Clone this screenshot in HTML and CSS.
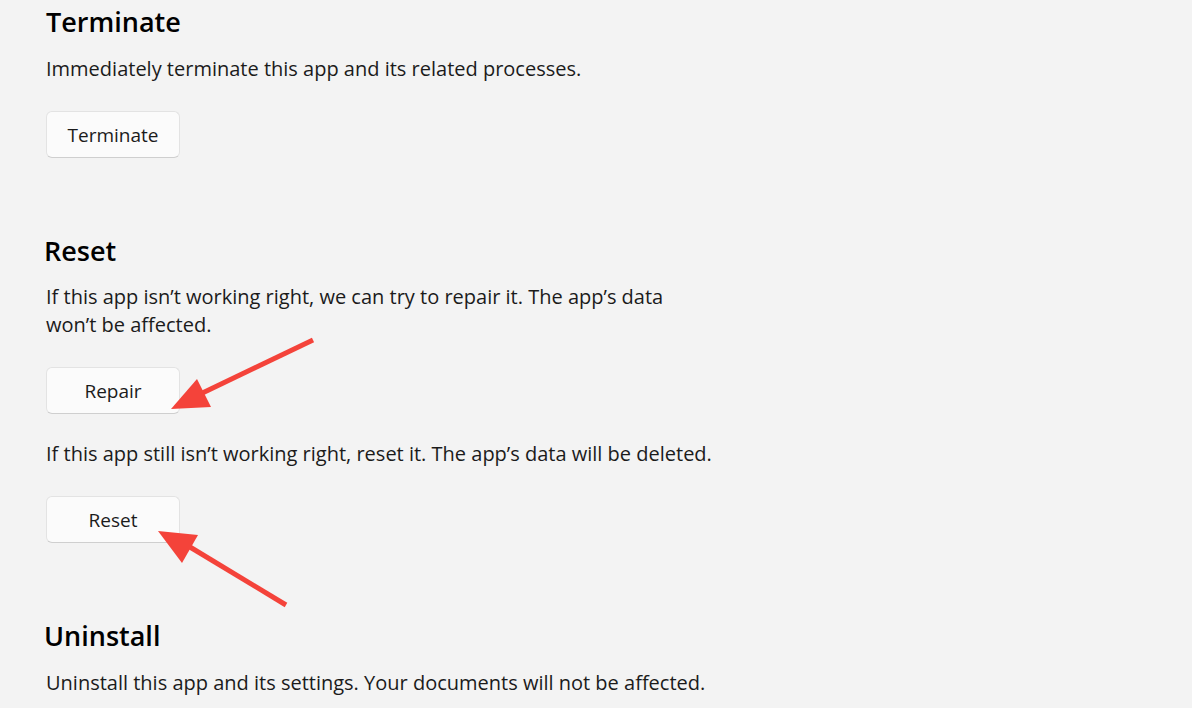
FILE: index.html
```html
<!DOCTYPE html>
<html lang="en">
<head>
<meta charset="utf-8">
<title>App settings</title>
<link rel="stylesheet" href="styles.css">
</head>
<body>
<main class="page">
  <section class="section first">
    <h2 class="title">Terminate</h2>
    <p class="desc">Immediately terminate this app and its related processes.</p>
    <button class="btn">Terminate</button>
  </section>

  <section class="section">
    <h2 class="title shift">Reset</h2>
    <p class="desc narrow">If this app isn’t working right, we can try to repair it. The app’s data won’t be affected.</p>
    <button class="btn">Repair</button>
    <p class="desc gap">If this app still isn’t working right, reset it. The app’s data will be deleted.</p>
    <button class="btn">Reset</button>
  </section>

  <section class="section">
    <h2 class="title shift">Uninstall</h2>
    <p class="desc">Uninstall this app and its settings. Your documents will not be affected.</p>
  </section>

  <svg class="arrows" width="1192" height="708" viewBox="0 0 1192 708" aria-hidden="true">
    <line x1="313" y1="340" x2="192" y2="398" stroke="#f4433a" stroke-width="5"/>
    <polygon points="171,409 197,379 211,407" fill="#f4433a"/>
    <line x1="286" y1="605" x2="180" y2="541" stroke="#f4433a" stroke-width="5"/>
    <polygon points="158,531 198,535 182,563" fill="#f4433a"/>
  </svg>
</main>
</body>
</html>
```

FILE: styles.css
```css
html, body {
  margin: 0;
  padding: 0;
  background: #f3f3f3;
}

body {
  font-family: "Open Sans", "Noto Sans", sans-serif;
  color: #1a1a1a;
  width: 1192px;
  height: 708px;
  overflow: hidden;
}

.page {
  position: relative;
  padding: 4px 0 0 46px;
  height: 708px;
  box-sizing: border-box;
}

.section {
  display: flex;
  flex-direction: column;
  align-items: flex-start;
  margin-top: 75px;
}

.section.first {
  margin-top: 0;
}

.title {
  margin: 0;
  font-size: 27px;
  line-height: 36px;
  font-weight: 600;
  color: #000;
}

.title.shift {
  margin-left: -2px;
}

.desc {
  margin: 15px 0 0;
  font-size: 20px;
  line-height: 28px;
  color: #1b1b1b;
}

.desc.narrow {
  max-width: 668px;
  margin-top: 14px;
}

.desc.gap {
  margin-top: 26px;
}

.btn {
  margin-top: 28px;
  width: 134px;
  height: 47px;
  box-sizing: border-box;
  background: #fbfbfb;
  border: 1px solid #e3e3e3;
  border-bottom-color: #cfcfcf;
  border-radius: 6px;
  font-family: inherit;
  font-size: 19px;
  color: #1b1b1b;
  padding: 0;
}

.arrows {
  position: absolute;
  left: 0;
  top: 0;
  pointer-events: none;
}
```
